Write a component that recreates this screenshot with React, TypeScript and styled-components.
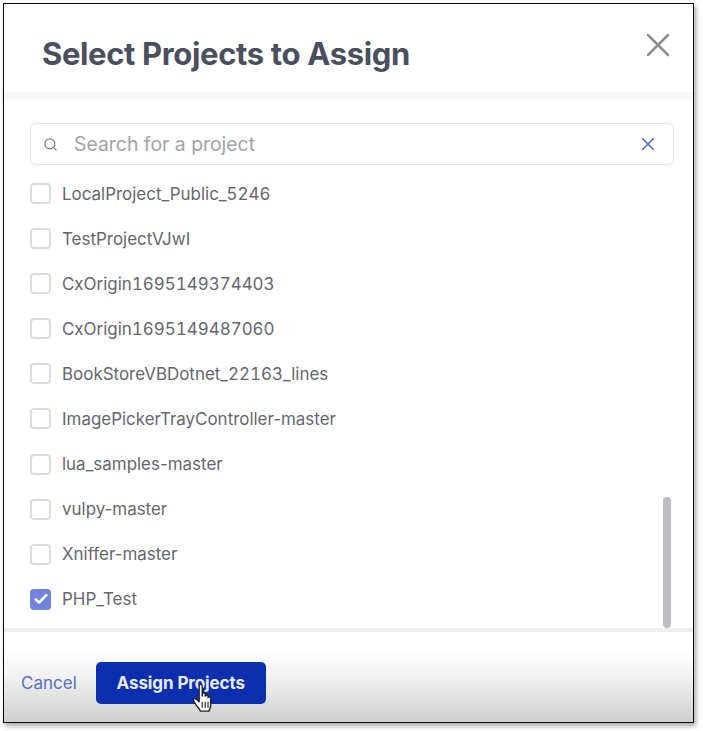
import React from "react";
import styled, { createGlobalStyle } from "styled-components";
import { Search, X } from "lucide-react";

const Global = createGlobalStyle`
  html, body { margin: 0; padding: 0; background: #fff; }
  body { width: 703px; height: 731px; overflow: hidden; font-family: Inter, "Liberation Sans", sans-serif; }
`;

const Frame = styled.div`
  box-sizing: border-box;
  position: relative;
  margin: 3px 0 0 3px;
  width: 691px;
  height: 720px;
  border: 1.5px solid #0c0c0c;
  background: #fff;
  box-shadow: 2px 3px 5px rgba(0, 0, 0, 0.35);
  display: flex;
  flex-direction: column;
`;

const Header = styled.header`
  flex: none;
  box-sizing: border-box;
  height: 88px;
  padding: 0 15px 0 38px;
  display: flex;
  justify-content: space-between;
  align-items: flex-start;
`;

const Title = styled.h1`
  margin: 30px 0 0;
  font-size: 31px;
  line-height: 40px;
  font-weight: 700;
  letter-spacing: -0.35px;
  color: #4a4f5e;
`;

const CloseButton = styled.button`
  border: 0;
  background: none;
  padding: 0;
  margin-top: 21px;
  width: 40px;
  height: 40px;
  color: #8e8e90;
  display: flex;
`;

const HeaderShade = styled.div`
  flex: none;
  height: 10px;
  background: linear-gradient(#f6f6f7, #fbfbfc);
`;

const Body = styled.div`
  flex: 1;
  position: relative;
  min-height: 0;
  padding: 21px 19px 0 26px;
  background: #fff;
`;

const SearchBox = styled.div`
  box-sizing: border-box;
  height: 42px;
  border: 1px solid #e2e2e5;
  border-radius: 5px;
  display: flex;
  align-items: center;
  padding: 0 14px 0 12px;
  color: #77777e;
`;

const Placeholder = styled.span`
  flex: 1;
  margin-left: 16px;
  font-size: 19.4px;
  color: #a3a2a9;
`;

const ClearIcon = styled.span`
  display: flex;
  color: #4d62c4;
`;

const List = styled.ul`
  list-style: none;
  margin: 6px 0 0;
  padding: 0;
`;

const Row = styled.li`
  height: 45.08px;
  display: flex;
  align-items: center;
  gap: 11px;
  font-size: 16.95px;
  color: #66666e;
`;

const Label = styled.span`
  white-space: pre;
`;

const Digits = styled.span`
  font-variant-numeric: tabular-nums;
`;

const Check = styled.span<{ $checked?: boolean }>`
  box-sizing: border-box;
  width: 21px;
  height: 21px;
  border-radius: 4px;
  display: flex;
  align-items: center;
  justify-content: center;
  border: ${(p) => (p.$checked ? "none" : "2px solid #dcdcdf")};
  background: ${(p) => (p.$checked ? "#7183dc" : "#fff")};
`;

const Thumb = styled.div`
  position: absolute;
  right: 22px;
  bottom: 0;
  width: 8px;
  height: 131px;
  border-radius: 4px;
  background: #bdbcc3;
`;

const Footer = styled.footer`
  flex: none;
  box-sizing: border-box;
  height: 94px;
  border-top: 4px solid #eeeeef;
  padding: 30px 0 0 17px;
  display: flex;
  align-items: flex-start;
  gap: 19px;
  background: linear-gradient(#fff 0%, #fff 22%, #f1f1f1 50%, #cfcfcf 100%);
`;

const Cancel = styled.button`
  border: 0;
  background: none;
  padding: 0;
  height: 42px;
  font: 400 17px Inter, "Liberation Sans", sans-serif;
  color: #5a70b8;
`;

const Assign = styled.button`
  box-sizing: border-box;
  width: 170px;
  height: 42px;
  border: 0;
  border-radius: 5px;
  background: #0b2fae;
  color: #e9ecf8;
  font: 700 17px Inter, "Liberation Sans", sans-serif;
  letter-spacing: -0.1px;
`;

const Pointer = styled.svg`
  position: absolute;
  left: 188px;
  top: 678px;
`;

const projects = [
  "LocalProject_Public_5246",
  "TestProjectVJwI",
  "CxOrigin1695149374403",
  "CxOrigin1695149487060",
  "BookStoreVBDotnet_22163_lines",
  "ImagePickerTrayController-master",
  "lua_samples-master",
  "vulpy-master",
  "Xniffer-master",
  "PHP_Test",
];

const renderName = (name: string) =>
  name.split(/(\d+)/).map((part, i) => (i % 2 ? <Digits key={i}>{part}</Digits> : part));

export default function App() {
  return (
    <>
      <Global />
      <Frame>
        <Header>
          <Title>Select Projects to Assign</Title>
          <CloseButton aria-label="Close">
            <X size={40} strokeWidth={2.5} absoluteStrokeWidth />
          </CloseButton>
        </Header>
        <HeaderShade />
        <Body>
          <SearchBox>
            <Search size={15} strokeWidth={1.8} />
            <Placeholder>Search for a project</Placeholder>
            <ClearIcon>
              <X size={22} strokeWidth={1.5} absoluteStrokeWidth />
            </ClearIcon>
          </SearchBox>
          <List>
            {projects.map((name) => {
              const checked = name === "PHP_Test";
              return (
                <Row key={name}>
                  <Check $checked={checked}>
                    {checked && (
                      <svg width="14" height="12" viewBox="0 0 14 12" fill="none">
                        <path d="M1.8 6.4 5.2 9.6 12.2 2.2" stroke="#fff" strokeWidth="2.6" strokeLinecap="round" strokeLinejoin="round" />
                      </svg>
                    )}
                  </Check>
                  <Label>{renderName(name)}</Label>
                </Row>
              );
            })}
          </List>
          <Thumb />
        </Body>
        <Footer>
          <Cancel>Cancel</Cancel>
          <Assign>Assign Projects</Assign>
        </Footer>
        <Pointer width="26" height="35" viewBox="0 0 22 30" fill="#fff" stroke="#222" strokeWidth="1.2" strokeLinejoin="round">
          <path d="M6 3.2c0-1.5 2.6-1.5 2.6 0V12l.1-1.6c0-1.4 2.5-1.4 2.5 0v1.8c0-1.3 2.4-1.3 2.4 0v1.3c0-1.2 2.3-1.2 2.3.1v6.2c0 2.3-.9 3.6-1.6 5.2H7.2c-.8-1.8-2.4-3.2-3.8-5.2L1.2 16c-.9-1.4.9-2.5 2-1.4L6 17V3.2z" />
          <path d="M8.6 17v5M11.2 17v5M13.6 17v5" fill="none" strokeWidth="1" />
        </Pointer>
      </Frame>
    </>
  );
}
